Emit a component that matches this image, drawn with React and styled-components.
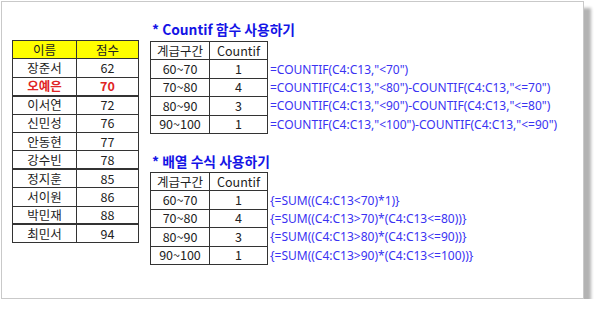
import React from 'react'
import styled, { createGlobalStyle } from 'styled-components';

const GlobalStyle = createGlobalStyle`
    body {
        margin: 0;
        background: #ffffff;
        font-family: "Noto Sans", "Noto Sans CJK KR", sans-serif;
    }
`

const scores = [
    { name: '장준서', score: 62 },
    { name: '오예은', score: 70, hot: true, thick: true },
    { name: '이서연', score: 72 },
    { name: '신민성', score: 76 },
    { name: '안동현', score: 77 },
    { name: '강수빈', score: 78, thick: true },
    { name: '정지훈', score: 85 },
    { name: '서이원', score: 86 },
    { name: '박민재', score: 88, thick: true },
    { name: '최민서', score: 94 },
]

const countifRows = [
    { range: '60~70', count: 1, formula: '=COUNTIF(C4:C13,"<70")' },
    { range: '70~80', count: 4, formula: '=COUNTIF(C4:C13,"<80")-COUNTIF(C4:C13,"<=70")' },
    { range: '80~90', count: 3, formula: '=COUNTIF(C4:C13,"<90")-COUNTIF(C4:C13,"<=80")' },
    { range: '90~100', count: 1, formula: '=COUNTIF(C4:C13,"<100")-COUNTIF(C4:C13,"<=90")' },
]

const arrayRows = [
    { range: '60~70', count: 1, formula: '{=SUM((C4:C13<70)*1)}' },
    { range: '70~80', count: 4, formula: '{=SUM((C4:C13>70)*(C4:C13<=80))}' },
    { range: '80~90', count: 3, formula: '{=SUM((C4:C13>80)*(C4:C13<=90))}' },
    { range: '90~100', count: 1, formula: '{=SUM((C4:C13>90)*(C4:C13<=100))}' },
]

const RangeTable = ({ title, rows, top, bottom }) => (
    <Section>
        <Title $mt={top} $mb={bottom}>* {title}</Title>
        <Table>
            <tbody>
                <Row>
                    <Cell $w={59}>계급구간</Cell>
                    <Cell $w={58}>Countif</Cell>
                </Row>
                {rows.map(r => (
                    <Row key={r.range}>
                        <Cell>{r.range}</Cell>
                        <Cell>{r.count}</Cell>
                        <Formula>{r.formula}</Formula>
                    </Row>
                ))}
            </tbody>
        </Table>
    </Section>
)

const App = () => {
    return(
        <>
            <GlobalStyle />
            <Sheet>
                <Table $mt={38}>
                    <tbody>
                        <Row>
                            <Cell $w={64} $head>이름</Cell>
                            <Cell $w={62} $head>점수</Cell>
                        </Row>
                        {scores.map(s => (
                            <Row key={s.name}>
                                <Cell $hot={s.hot} $thick={s.thick}>{s.name}</Cell>
                                <Cell $hot={s.hot} $thick={s.thick}>{s.score}</Cell>
                            </Row>
                        ))}
                    </tbody>
                </Table>
                <RightColumn>
                    <RangeTable title="Countif 함수 사용하기" rows={countifRows} top={18} bottom={3} />
                    <RangeTable title="배열 수식 사용하기" rows={arrayRows} top={18} bottom={2} />
                </RightColumn>
            </Sheet>
        </>
    )
}

const Sheet = styled.div`
    box-sizing: border-box;
    margin: 1px 0 0 1px;
    width: 583px;
    height: 298px;
    padding: 0 0 0 10px;
    border: 1px solid #c9c9c9;
    background: #ffffff;
    box-shadow: 7px 7px 3px #b3b3b3;
    display: flex;
    align-items: flex-start;
    gap: 11px;
`
const RightColumn = styled.div`
    display: flex;
    flex-direction: column;
`
const Section = styled.div`
    display: flex;
    flex-direction: column;
`
const Title = styled.div`
    margin: ${props => props.$mt || 0}px 0 ${props => props.$mb || 0}px 2px;
    height: 18px;
    line-height: 18px;
    font-family: "Noto Sans CJK KR", "Noto Sans", sans-serif;
    font-weight: bold;
    font-size: 13.8px;
    color: #1414e6;
    white-space: nowrap;
`
const Table = styled.table`
    margin-top: ${props => props.$mt || 0}px;
    border-collapse: collapse;
    font-size: 12.5px;
    color: #222222;
`
const Row = styled.tr`
    height: 18.4px;
`
const Cell = styled.td`
    width: ${props => props.$w ? props.$w + 'px' : 'auto'};
    box-sizing: border-box;
    padding: 0;
    height: 18.4px;
    line-height: 16px;
    text-align: center;
    border: 1px solid #333333;
    border-bottom-width: ${props => props.$thick ? 2 : 1}px;
    background: ${props => props.$head ? '#ffff00' : '#ffffff'};
    color: ${props => props.$hot ? '#e02424' : '#222222'};
    font-weight: ${props => props.$hot ? 'bold' : 'normal'};
    font-family: "Noto Sans CJK KR", "Noto Sans", sans-serif;
`
const Formula = styled.td`
    padding: 0 0 0 2px;
    white-space: nowrap;
    font-size: 12px;
    color: #3a32f2;
    font-family: "Noto Sans", "Noto Sans CJK KR", sans-serif;
`

export default App;
